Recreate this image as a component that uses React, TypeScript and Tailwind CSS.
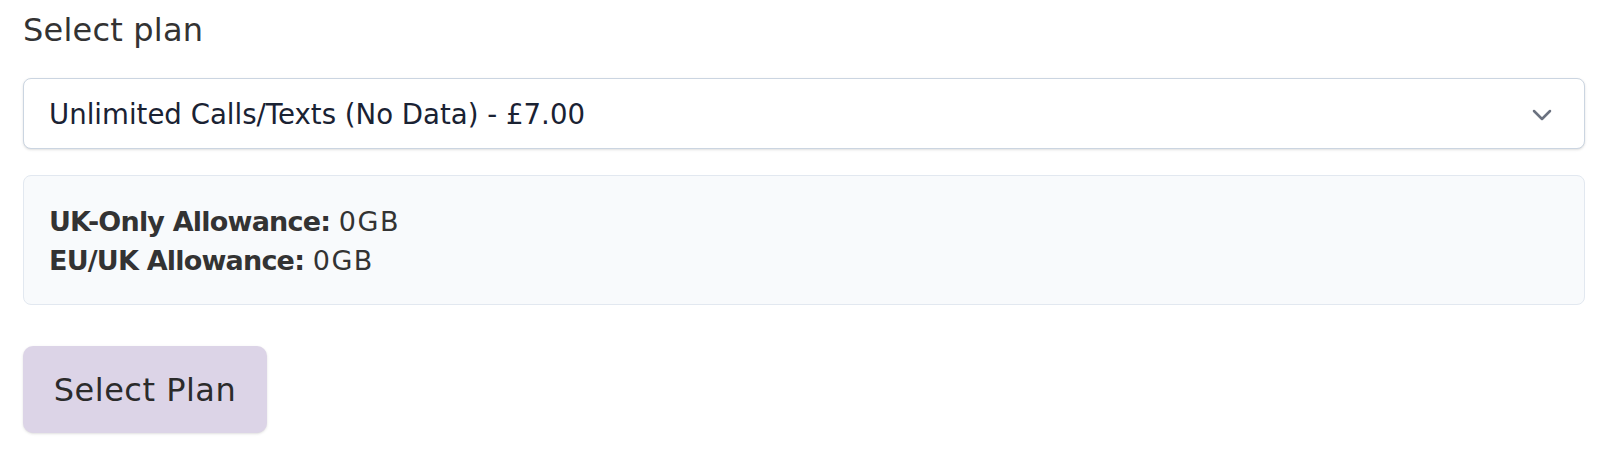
import { useState } from "react";

type Plan = {
    id: string;
    name: string;
    price: number;
    ukAllowance: string;
    euAllowance: string;
};

const plans: Plan[] = [
    { id: "calls-texts", name: "Unlimited Calls/Texts (No Data)", price: 7, ukAllowance: "0GB", euAllowance: "0GB" },
];

const ChevronDown = () => (
    <svg width="32" height="32" viewBox="0 0 24 24" fill="none" stroke="#6b7280" strokeWidth="1.9" strokeLinecap="round" strokeLinejoin="round">
        <path d="m6 9 6 6 6-6" />
    </svg>
);

export default function App() {
    const [selected] = useState<Plan>(plans[0]);

    return (
        <div className="min-h-[470px] bg-white pt-[8px] pl-[23px] pr-[21px] font-['DejaVu_Sans',sans-serif]">
            <div className="mb-[26px] text-[32px] leading-[44px] tracking-[0.2px] text-[#333333]">Select plan</div>

            <div className="flex h-[71px] items-center justify-between rounded-[8px] border border-[#cbd5e1] bg-white pt-[2px] pl-[25px] pr-[26px] shadow-sm">
                <span className="text-[27.6px] leading-[40px] text-[#1a2233]">
                    {selected.name} - £{selected.price.toFixed(2)}
                </span>
                <ChevronDown />
            </div>

            <div className="mt-[26px] rounded-[8px] border border-[#e2e8f0] bg-[#f8fafc] pl-[25px] pt-[26px] pb-[24px] text-[27px] leading-[39px] text-[#333333]">
                <div>
                    <span className="font-bold tracking-[-0.8px]">UK-Only Allowance:</span>{" "}
                    <span className="tracking-[1.5px]">{selected.ukAllowance}</span>
                </div>
                <div>
                    <span className="font-bold tracking-[-0.8px]">EU/UK Allowance:</span>{" "}
                    <span className="tracking-[1.5px]">{selected.euAllowance}</span>
                </div>
            </div>

            <button className="mt-[41px] flex h-[87px] w-[244px] items-center justify-center rounded-[10px] bg-[#dcd4e7] text-[32px] leading-[44px] tracking-[0.5px] text-[#2b2b2b] shadow-sm">
                Select Plan
            </button>
        </div>
    );
}
